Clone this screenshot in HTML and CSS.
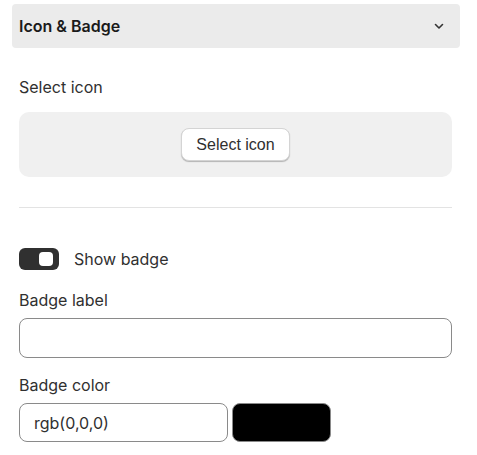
FILE: index.html
```html
<!DOCTYPE html>
<html lang="en">

<head>
    <meta charset="UTF-8">
    <meta name="viewport" content="width=device-width, initial-scale=1.0">
    <title>Icon &amp; Badge</title>
    <link rel="stylesheet" href="styles.css">
</head>

<body>
    <div class="panel">
        <div class="panel-header">
            <span class="panel-title">Icon &amp; Badge</span>
            <svg class="chevron" width="10" height="10" viewBox="0 0 10 10">
                <path d="M1.5 3.5 L5 7 L8.5 3.5" fill="none" stroke="#333" stroke-width="1.6" stroke-linecap="round" stroke-linejoin="round" />
            </svg>
        </div>

        <div class="panel-body">
            <div class="field">
                <label class="field-label">Select icon</label>
                <div class="icon-picker">
                    <button class="picker-button">Select icon</button>
                </div>
            </div>

            <hr class="divider">

            <div class="toggle-row">
                <label class="toggle-switch">
                    <input type="checkbox" checked>
                    <span class="toggle-slider"></span>
                </label>
                <span class="toggle-label">Show badge</span>
            </div>

            <div class="field">
                <label class="field-label">Badge label</label>
                <input type="text" class="text-input">
            </div>

            <div class="field">
                <label class="field-label">Badge color</label>
                <div class="color-row">
                    <input type="text" class="text-input color-input" value="rgb(0,0,0)">
                    <div class="color-swatch"></div>
                </div>
            </div>
        </div>
    </div>
</body>

</html>
```

FILE: styles.css
```css
body {
    font-family: Inter, "Noto Sans", sans-serif;
    background: #fff;
    color: #303030;
    margin: 0;
    padding: 4px 17px 0 12px;
}

.panel-header {
    display: flex;
    align-items: center;
    justify-content: space-between;
    height: 44px;
    padding: 0 16px 0 7px;
    background: #ebebeb;
    border-radius: 4px;
}

.panel-title {
    font-size: 16px;
    font-weight: 600;
    color: #1a1a1a;
}

.chevron {
    display: block;
}

.panel-body {
    padding: 29px 8px 0 7px;
}

.field {
    display: flex;
    flex-direction: column;
}

.field-label {
    font-size: 16px;
    line-height: 20px;
    margin-bottom: 15px;
}

.icon-picker {
    display: flex;
    justify-content: center;
    padding: 16px 0;
    background: #f0f0f0;
    border-radius: 10px;
}

.picker-button {
    font-family: "Liberation Sans", Arial, sans-serif;
    font-size: 16px;
    color: #303030;
    background: #fff;
    height: 33px;
    padding: 0 14px;
    border: 1px solid #d4d4d4;
    border-radius: 8px;
    box-shadow: 0 1px 1px rgba(0, 0, 0, 0.25);
    cursor: pointer;
}

.divider {
    border: none;
    border-top: 1px solid #e3e3e3;
    margin: 30px 0 40px;
}

.toggle-row {
    display: flex;
    align-items: center;
    gap: 15px;
    margin-bottom: 20px;
}

.toggle-switch {
    position: relative;
    display: inline-block;
    width: 40px;
    height: 22px;
}

.toggle-switch input {
    opacity: 0;
    width: 0;
    height: 0;
}

.toggle-slider {
    position: absolute;
    top: 0;
    left: 0;
    right: 0;
    bottom: 0;
    background: #303030;
    border-radius: 6px;
    cursor: pointer;
}

.toggle-slider:before {
    position: absolute;
    content: "";
    width: 14px;
    height: 14px;
    left: 4px;
    top: 4px;
    background: #fff;
    border-radius: 4px;
}

input:checked+.toggle-slider:before {
    transform: translateX(16px);
}

.toggle-label {
    font-size: 16px;
}

.field + .field {
    margin-top: 17px;
}

.field .field-label + .text-input,
.field .field-label + .color-row {
    margin-top: -7px;
}

.text-input {
    box-sizing: border-box;
    height: 40px;
    width: 100%;
    padding: 0 14px;
    font-family: Inter, "Noto Sans", sans-serif;
    font-size: 16px;
    color: #303030;
    border: 1px solid #8a8a8a;
    border-radius: 8px;
    outline: none;
}

.color-row {
    display: flex;
    gap: 4px;
}

.color-input {
    width: 209px;
    height: 39px;
}

.color-swatch {
    width: 99px;
    height: 39px;
    box-sizing: border-box;
    background: #000;
    border: 1px solid #8a8a8a;
    border-radius: 8px;
}
```
